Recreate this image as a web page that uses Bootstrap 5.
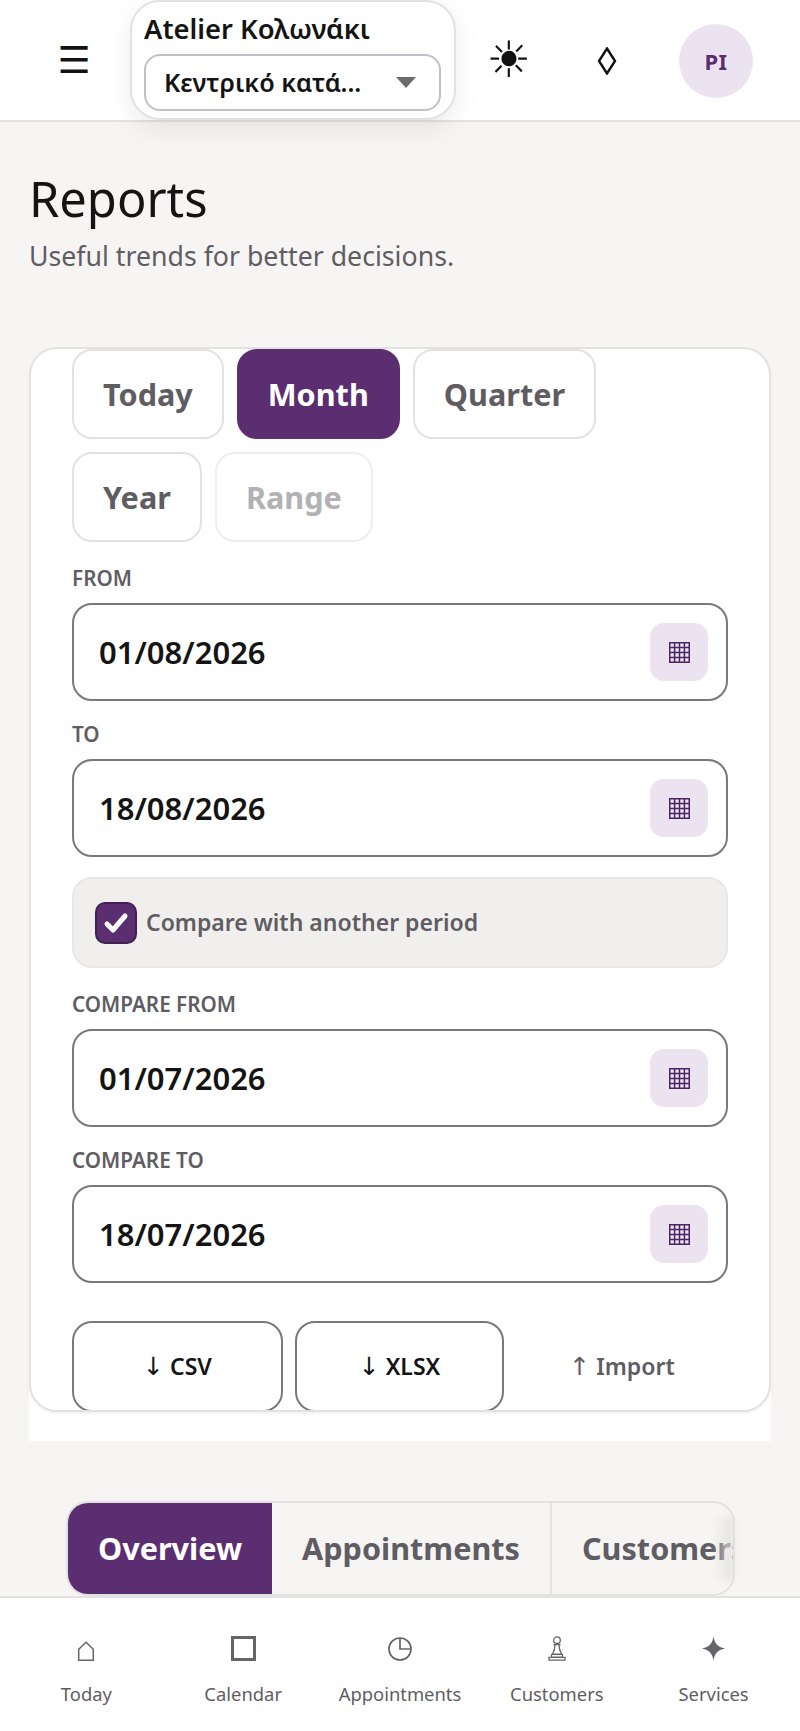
<!DOCTYPE html>
<html lang="en">
<head>
<meta charset="utf-8">
<title>Reports</title>
<link href="https://cdn.jsdelivr.net/npm/bootstrap@5.3.0/dist/css/bootstrap.min.css" rel="stylesheet">
<style>
:root{--plum:#5b2e71;--plum-soft:#ebe4f0;--muted:#5f5d63;--line:#e4e2e0;--page:#f6f5f3;--strong:#7a787c}
html,body{height:100%}
body{width:800px;height:1731px;overflow:hidden;background:var(--page);font-family:"Noto Sans","Liberation Sans",sans-serif;color:#141414}
.shell{height:1731px}
.topbar{height:122px;background:#fff;border-bottom:2px solid var(--line);padding-left:56px;padding-right:46px;position:relative;z-index:2}
.burger{font-family:"DejaVu Sans",sans-serif;font-size:37px;line-height:1;width:36px;color:#111;margin-right:38px;text-align:center}
.store{width:326px;height:120px;align-self:flex-start;background:#fff;border:2px solid var(--line);border-radius:30px;box-shadow:0 8px 24px rgba(0,0,0,.08);padding:9px 13px 0 12px;margin-right:28px}
.store-name{font-size:27.4px;font-weight:600;line-height:36px;height:36px;white-space:nowrap}
.store-select{margin-top:7px;height:57px;border:2px solid #c3bfc7;border-radius:16px;padding:0 23px 0 18px;font-size:25.2px;font-weight:600;background:#fff;white-space:nowrap}
.store-arrow{width:0;height:0;border-left:10px solid transparent;border-right:10px solid transparent;border-top:11px solid #6b6a6d}
.tool-sun{font-family:"DejaVu Sans",sans-serif;font-size:50px;line-height:1;width:50px;text-align:center;color:#111;margin-right:61px}
.tool-gem{width:24px;margin-right:60px;display:flex;justify-content:center;margin-top:2px}
.avatar{width:74px;height:74px;border-radius:50%;background:var(--plum-soft);color:var(--plum);font-size:22px;font-weight:700;letter-spacing:.5px;margin-top:2px}
.content{padding:0 29px;flex:1 1 auto;min-height:0}
.page-title{font-size:48.8px;font-weight:400;line-height:68px;margin:42px 0 0}
.page-sub{font-size:26.7px;line-height:36px;color:var(--muted);margin:6px 0 0;height:36px;white-space:nowrap}
.panel-wrap{margin-top:73px;padding-bottom:29px;background:linear-gradient(transparent 60px,#fff 60px)}
.panel{height:1065px;background:#fff;border:2px solid var(--line);border-radius:28px;padding:0 41px;overflow:hidden;box-shadow:0 2px 3px rgba(0,0,0,.05)}
.chip{height:90px;padding:0 29px;background:#fff;border:2px solid var(--line);border-radius:20px;color:var(--muted);font-size:30.6px;font-weight:700;line-height:1}
.chip.chip-on{background:var(--plum);border-color:var(--plum);color:#fff}
.chip.chip-off{color:#b2b1b4;border-color:#efeeed;opacity:1}
.chips{margin-bottom:23px;gap:13px}
.field-label{display:block;font-size:20.7px;font-weight:600;line-height:26px;color:var(--muted);margin:0 0 12px;text-transform:uppercase}
.date-box{height:98px;padding:0 18px 0 25px;background:#fff;border:2px solid var(--strong);border-radius:20px;font-size:31px;font-weight:600;color:#141414}
.date-btn{width:58px;height:58px;background:var(--plum-soft);border-radius:14px}
.field{margin-bottom:20px}
.compare{height:91px;margin-bottom:23px;padding:0 21px;background:#f0efed;border:2px solid #e9e8e6;border-radius:20px;gap:9px}
.compare .form-check-input{width:42px;height:42px;margin:0;border-radius:10px;border:2px solid #3f2050;background-color:var(--plum);background-size:42px;background-image:url("data:image/svg+xml,%3csvg xmlns='http://www.w3.org/2000/svg' viewBox='0 0 42 42'%3e%3cpath fill='none' stroke='%23fff' stroke-width='5' stroke-linecap='round' stroke-linejoin='round' d='M12 22l6 6 12-14'/%3e%3c/svg%3e");float:none;flex:none}
.compare .form-check-label{font-size:23px;font-weight:600;color:var(--muted)}
.act{height:91px;border-radius:20px;font-size:23px;font-weight:600;color:#141414;background:#fff;border:2px solid var(--strong);padding:0}
.act-arrow{font-family:"DejaVu Sans",sans-serif;font-weight:400;font-size:25px;line-height:1}
.act-csv{width:211px}.act-xlsx{width:209px}
.act-plain{flex:1 1 0;border-color:transparent;color:var(--muted)}
.actions{margin-top:38px;gap:12px}
.tabs-wrap{margin:60px 36px 0 37px;height:95px;position:relative}
.tabstrip{height:95px;border:2px solid var(--line);border-radius:22px;overflow:hidden;flex-wrap:nowrap}
.tabstrip .nav-link{flex:none;height:91px;padding:0 30px;border-radius:0;border-right:2px solid var(--line);background:transparent;color:var(--muted);font-size:30.6px;font-weight:700;white-space:nowrap;line-height:91px}
.tabstrip .nav-link.active{background:var(--plum);color:#fff;border-right:0}
.tab-fade{position:absolute;right:2px;top:16px;bottom:16px;width:20px;background:linear-gradient(90deg,rgba(230,229,227,0),rgba(225,224,222,.9));border-radius:12px 0 0 12px;filter:blur(3px)}
.dock{height:135px;flex:none;background:#fff;border-top:2px solid var(--line);padding:0 8px;position:relative;z-index:2}
.dock-item{width:157px;color:var(--muted);text-decoration:none;padding-top:32px}
.dock-ico{height:31px;display:flex;align-items:flex-end}
.dock-text{font-size:18.4px;line-height:26px;margin-top:20px}
</style>
</head>
<body>
<div class="shell d-flex flex-column">
  <header class="topbar d-flex align-items-center flex-none">
    <span class="burger">☰</span>
    <div class="store">
      <div class="store-name">Atelier Κολωνάκι</div>
      <div class="store-select d-flex align-items-center justify-content-between">
        <span>Κεντρικό κατά...</span><span class="store-arrow"></span>
      </div>
    </div>
    <span class="tool-sun">☀</span>
    <span class="tool-gem"><svg width="20" height="28" viewBox="0 0 20 28"><path d="M10 1.5 18 14 10 26.5 2 14Z" fill="none" stroke="#111" stroke-width="2.4"/></svg></span>
    <span class="avatar d-flex align-items-center justify-content-center">PI</span>
  </header>

  <main class="content">
    <h1 class="page-title">Reports</h1>
    <p class="page-sub">Useful trends for better decisions.</p>

    <svg width="0" height="0" class="position-absolute"><symbol id="grid" viewBox="0 0 21 21"><path d="M.75.75h19.5v19.5H.75zM5.6 1v19M10.5 1v19M15.4 1v19M1 5.6h19M1 10.5h19M1 15.4h19" fill="none" stroke="#4a2563" stroke-width="1.5"/></symbol></svg>

    <div class="panel-wrap">
      <section class="panel">
        <div class="d-flex flex-wrap chips">
          <button class="btn chip">Today</button>
          <button class="btn chip chip-on">Month</button>
          <button class="btn chip">Quarter</button>
          <button class="btn chip">Year</button>
          <button class="btn chip chip-off">Range</button>
        </div>

        <div class="field">
          <label class="field-label">From</label>
          <div class="form-control date-box d-flex align-items-center justify-content-between"><span>01/08/2026</span><span class="date-btn d-flex align-items-center justify-content-center"><svg width="21" height="21"><use href="#grid"/></svg></span></div>
        </div>
        <div class="field">
          <label class="field-label">To</label>
          <div class="form-control date-box d-flex align-items-center justify-content-between"><span>18/08/2026</span><span class="date-btn d-flex align-items-center justify-content-center"><svg width="21" height="21"><use href="#grid"/></svg></span></div>
        </div>
        <div class="form-check compare d-flex align-items-center">
          <input class="form-check-input" type="checkbox" id="cmp" checked>
          <label class="form-check-label" for="cmp">Compare with another period</label>
        </div>
        <div class="field">
          <label class="field-label">Compare from</label>
          <div class="form-control date-box d-flex align-items-center justify-content-between"><span>01/07/2026</span><span class="date-btn d-flex align-items-center justify-content-center"><svg width="21" height="21"><use href="#grid"/></svg></span></div>
        </div>
        <div class="field mb-0">
          <label class="field-label">Compare to</label>
          <div class="form-control date-box d-flex align-items-center justify-content-between"><span>18/07/2026</span><span class="date-btn d-flex align-items-center justify-content-center"><svg width="21" height="21"><use href="#grid"/></svg></span></div>
        </div>

        <div class="d-flex actions">
          <button class="btn act act-csv"><span class="act-arrow">↓</span> CSV</button>
          <button class="btn act act-xlsx"><span class="act-arrow">↓</span> XLSX</button>
          <button class="btn act act-plain"><span class="act-arrow">↑</span> Import</button>
        </div>
      </section>
    </div>

    <div class="tabs-wrap">
      <ul class="nav tabstrip">
        <li class="nav-item"><a class="nav-link active" href="#">Overview</a></li>
        <li class="nav-item"><a class="nav-link" href="#">Appointments</a></li>
        <li class="nav-item"><a class="nav-link" href="#">Customers</a></li>
      </ul>
      <div class="tab-fade"></div>
    </div>
  </main>

  <nav class="dock d-flex">
    <a class="dock-item d-flex flex-column align-items-center" href="#"><span class="dock-ico"><svg width="18" height="20" viewBox="0 0 18 20"><path d="M1.7 19.2V8.2L9 1.2l7.3 7v11Z" fill="none" stroke="#66646a" stroke-width="1.5"/></svg></span><span class="dock-text">Today</span></a>
    <a class="dock-item d-flex flex-column align-items-center" href="#"><span class="dock-ico"><svg width="25" height="25" viewBox="0 0 25 25"><rect x="1.5" y="1.5" width="22" height="22" fill="none" stroke="#66646a" stroke-width="3"/></svg></span><span class="dock-text">Calendar</span></a>
    <a class="dock-item d-flex flex-column align-items-center" href="#"><span class="dock-ico"><svg width="24" height="24" viewBox="0 0 24 24"><circle cx="12" cy="12" r="11" fill="none" stroke="#66646a" stroke-width="1.7"/><path d="M12 1v11h11" fill="none" stroke="#66646a" stroke-width="1.7"/></svg></span><span class="dock-text">Appointments</span></a>
    <a class="dock-item d-flex flex-column align-items-center" href="#"><span class="dock-ico"><svg width="18" height="25" viewBox="0 0 18 25"><g fill="none" stroke="#66646a" stroke-width="1.3"><circle cx="9" cy="4.2" r="3.3"/><path d="M5.5 8.6h7M7 8.6c0 5-1 7-2.5 9.6h9C12 15.600 11 13.600 11 8.600M3.500 18.400h11v2.800h-11zM1 21.300h16v2.900H1z"/></g></svg></span><span class="dock-text">Customers</span></a>
    <a class="dock-item d-flex flex-column align-items-center" href="#"><span class="dock-ico"><svg width="23" height="25" viewBox="0 0 23 25"><path d="M11.500 0C12.500 7.500 15.500 11 23 12.500 15.500 14 12.500 17.500 11.500 25 10.500 17.500 7.500 14 0 12.500 7.500 11 10.500 7.500 11.500 0Z" fill="#66646a"/></svg></span><span class="dock-text">Services</span></a>
  </nav>
</div>
<script src="https://cdn.jsdelivr.net/npm/bootstrap@5.3.0/dist/js/bootstrap.bundle.min.js"></script>
</body>
</html>
